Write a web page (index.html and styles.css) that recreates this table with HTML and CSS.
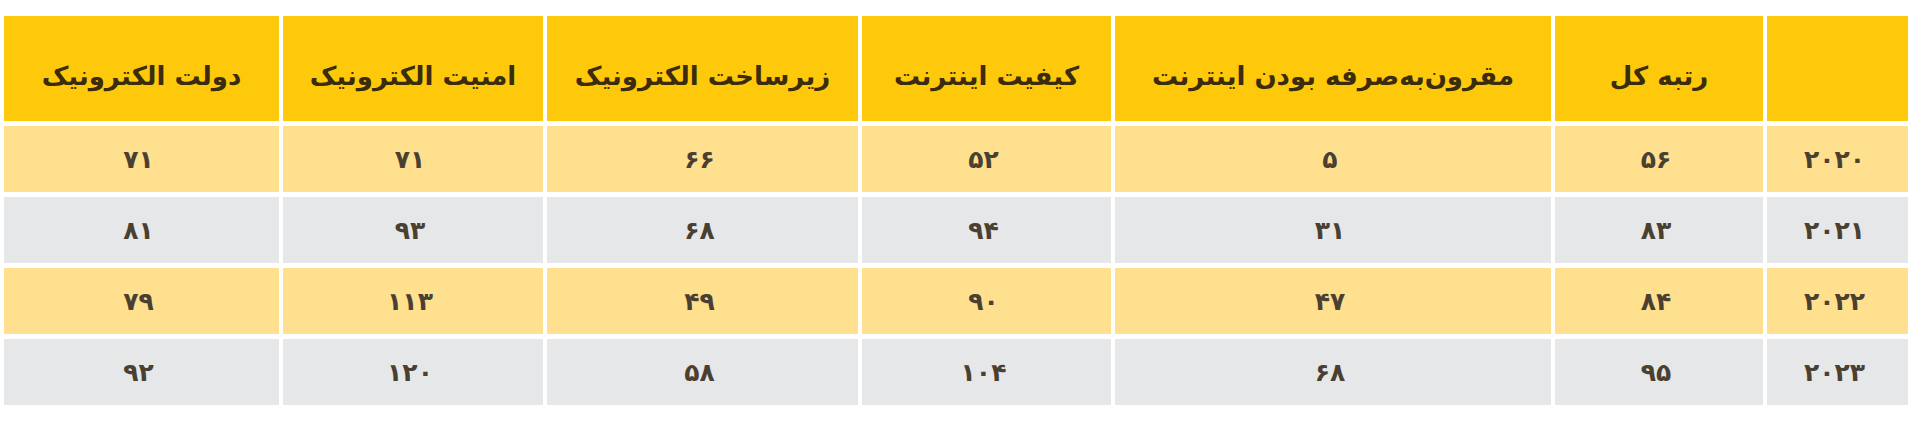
FILE: index.html
```html
<!DOCTYPE html>
<html lang="fa" dir="rtl">
<head>
<meta charset="utf-8">
<title>جدول رتبه‌ها</title>
<link rel="stylesheet" href="styles.css">
</head>
<body>
<table class="rank-table">
  <colgroup>
    <col class="c-year">
    <col class="c-total">
    <col class="c-cost">
    <col class="c-quality">
    <col class="c-infra">
    <col class="c-security">
    <col class="c-gov">
  </colgroup>
  <thead>
    <tr>
      <th></th>
      <th>رتبه کل</th>
      <th>مقرون‌به‌صرفه بودن اینترنت</th>
      <th>کیفیت اینترنت</th>
      <th>زیرساخت الکترونیک</th>
      <th>امنیت الکترونیک</th>
      <th>دولت الکترونیک</th>
    </tr>
  </thead>
  <tbody>
    <tr class="row-yellow">
      <td>۲۰۲۰</td><td>۵۶</td><td>۵</td><td>۵۲</td><td>۶۶</td><td>۷۱</td><td>۷۱</td>
    </tr>
    <tr class="row-gray">
      <td>۲۰۲۱</td><td>۸۳</td><td>۳۱</td><td>۹۴</td><td>۶۸</td><td>۹۳</td><td>۸۱</td>
    </tr>
    <tr class="row-yellow">
      <td>۲۰۲۲</td><td>۸۴</td><td>۴۷</td><td>۹۰</td><td>۴۹</td><td>۱۱۳</td><td>۷۹</td>
    </tr>
    <tr class="row-gray">
      <td>۲۰۲۳</td><td>۹۵</td><td>۶۸</td><td>۱۰۴</td><td>۵۸</td><td>۱۲۰</td><td>۹۲</td>
    </tr>
  </tbody>
</table>
</body>
</html>
```

FILE: styles.css
```css
html, body {
  margin: 0;
  padding: 0;
  background: #ffffff;
}

body {
  font-family: "DejaVu Sans", "Noto Sans", sans-serif;
}

.rank-table {
  margin: 11px auto 0 0;
  width: 1912px;
  table-layout: fixed;
  border-collapse: separate;
  border-spacing: 4px 5px;
}

.c-year { width: 141px; }
.c-total { width: 208px; }
.c-cost { width: 436px; }
.c-quality { width: 249px; }
.c-infra { width: 311px; }
.c-security { width: 260px; }
.c-gov { width: 275px; }

.rank-table th {
  height: 105px;
  padding: 14px 0 0;
  box-sizing: border-box;
  background: #fec90b;
  color: #3a2c0c;
  font-size: 26px;
  font-weight: bold;
  text-align: center;
  vertical-align: middle;
}

.rank-table td {
  height: 66px;
  padding: 0 6px 0 0;
  box-sizing: border-box;
  color: #4a4031;
  font-size: 25px;
  font-weight: bold;
  letter-spacing: 6px;
  text-align: center;
  vertical-align: middle;
}

.row-yellow td { background: #fee08f; }
.row-gray td { background: #e6e7e9; }
```
